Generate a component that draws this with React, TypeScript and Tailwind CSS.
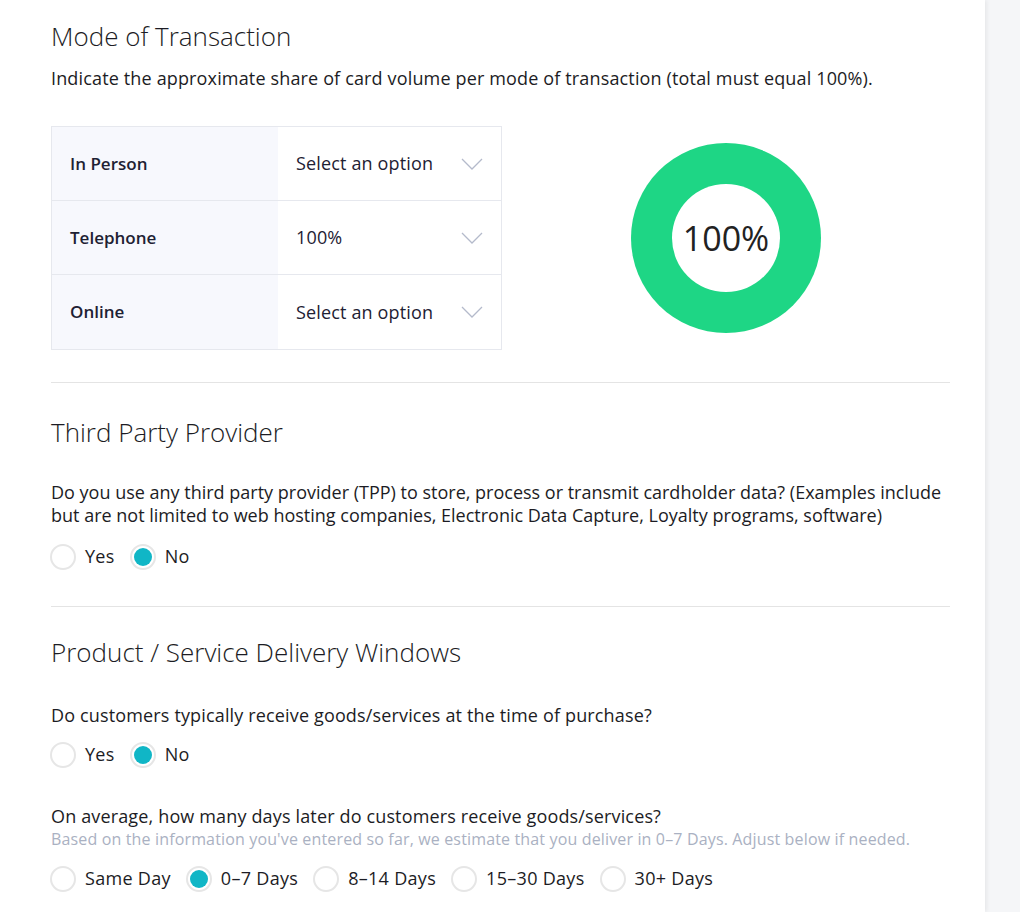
import React from "react";

function Radio({ label, checked }: { label: string; checked?: boolean }) {
  return (
    <label className="flex items-center gap-[9px] mr-[15px]">
      <span className="w-[26px] h-[26px] rounded-full border-2 border-[#e6e6e6] bg-white flex items-center justify-center">
        {checked && <span className="w-[18px] h-[18px] rounded-full bg-[#10b6c6]" />}
      </span>
      <span className="text-[18px] tracking-[0.3px] text-[#1c1c24]">{label}</span>
    </label>
  );
}

function Chevron() {
  return (
    <svg width="22" height="12" viewBox="0 0 22 12" fill="none">
      <path d="M1 1 L11 11 L21 1" stroke="#b4bacb" strokeWidth="1.3" />
    </svg>
  );
}

function Row({ label, value, last }: { label: string; value: string; last?: boolean }) {
  return (
    <div className={`flex h-[74px] ${last ? "" : "border-b border-[#e6e8ee]"}`}>
      <div className="w-[226px] bg-[#f7f8fd] flex items-center pl-[18px] font-semibold text-[17px] text-[#1e2133]">
        {label}
      </div>
      <div className="flex-1 flex items-center justify-between pl-[18px] pr-[18px] text-[18px] tracking-[0.15px] text-[#1e2133]">
        <span>{value}</span>
        <Chevron />
      </div>
    </div>
  );
}

export default function App() {
  return (
    <div className="min-h-[912px] bg-[#f5f6f8] flex" style={{ fontFamily: "'Open Sans', 'Noto Sans', sans-serif" }}>
      <div className="w-[985px] bg-white shadow-[2px_0_4px_rgba(0,0,0,0.06)] pl-[51px] pr-[35px] pt-[18px] text-[#1c1c24] min-h-[912px]">
        <h2 className="text-[26px] font-light leading-[36px]">Mode of Transaction</h2>
        <p className="text-[18px] tracking-[0.15px] mt-[12px] leading-[24px]">
          Indicate the approximate share of card volume per mode of transaction (total must equal 100%).
        </p>
        <div className="flex mt-[36px] items-center">
          <div className="w-[451px] border border-[#e6e8ee]">
            <Row label="In Person" value="Select an option" />
            <Row label="Telephone" value="100%" />
            <Row label="Online" value="Select an option" last />
          </div>
          <div className="flex-1 flex justify-center">
            <div className="w-[190px] h-[190px] rounded-full bg-[#1ed685] flex items-center justify-center">
              <div className="w-[108px] h-[108px] rounded-full bg-white flex items-center justify-center text-[34px] text-[#222]">
                100%
              </div>
            </div>
          </div>
        </div>
        <div className="border-t border-[#e4e4e4] mt-[32px] w-[899px]" />
        <h2 className="text-[26px] font-light leading-[36px] mt-[31px]">Third Party Provider</h2>
        <p className="text-[18px] tracking-[0px] mt-[31px] leading-[23px] w-[920px] whitespace-nowrap">
          Do you use any third party provider (TPP) to store, process or transmit cardholder data? (Examples include
          <br />
          but are not limited to web hosting companies, Electronic Data Capture, Loyalty programs, software)
        </p>
        <div className="flex mt-[16px] -ml-[1px]">
          <Radio label="Yes" />
          <Radio label="No" checked />
        </div>
        <div className="border-t border-[#e4e4e4] mt-[36px] w-[899px]" />
        <h2 className="text-[26px] font-light leading-[36px] mt-[27px]">Product / Service Delivery Windows</h2>
        <p className="text-[18px] tracking-[0.15px] mt-[34px] leading-[23px]">
          Do customers typically receive goods/services at the time of purchase?
        </p>
        <div className="flex mt-[14px] -ml-[1px]">
          <Radio label="Yes" />
          <Radio label="No" checked />
        </div>
        <p className="text-[18px] tracking-[0.15px] mt-[37px] leading-[23px]">
          On average, how many days later do customers receive goods/services?
        </p>
        <p className="text-[16px] tracking-[0.15px] leading-[22px] text-[#aab1c2] whitespace-nowrap">
          Based on the information you've entered so far, we estimate that you deliver in 0–7 Days. Adjust below if needed.
        </p>
        <div className="flex mt-[15px] -ml-[1px]">
          <Radio label="Same Day" />
          <Radio label="0–7 Days" checked />
          <Radio label="8–14 Days" />
          <Radio label="15–30 Days" />
          <Radio label="30+ Days" />
        </div>
      </div>
    </div>
  );
}
